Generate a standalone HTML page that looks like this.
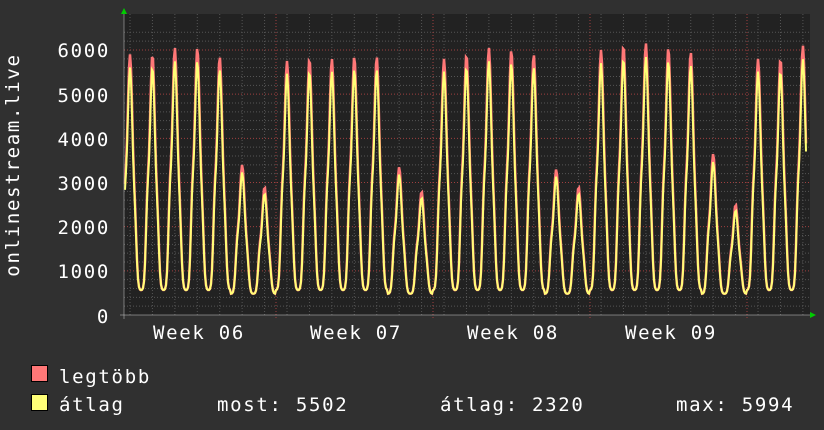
<!DOCTYPE html><html><head><meta charset="utf-8"><style>
body{margin:0;background:#303030;width:824px;height:430px;overflow:hidden;font-family:"DejaVu Sans Mono","Liberation Mono",monospace;color:#fff}
svg{position:absolute;left:0;top:0}
text{letter-spacing:1.7px}
</style></head><body>
<svg width="824" height="430" xmlns="http://www.w3.org/2000/svg" font-family="DejaVu Sans Mono, Liberation Mono, monospace">
<rect x="124" y="14" width="686" height="301" fill="#222"/>
<g id="grid"></g>
<g id="data"></g>
<line x1="124" y1="10" x2="124" y2="319" stroke="#ccc" stroke-width="1" opacity="0.5"/>
<line x1="120" y1="315" x2="812" y2="315" stroke="#ccc" stroke-width="1" opacity="0.5"/>
<polygon points="121,14 127,14 124,8" fill="#0c0"/>
<polygon points="810,312 810,318 816,315" fill="#0c0"/>
<g fill="#fff" font-size="19" text-anchor="end">
<text x="110" y="57">6000</text><text x="110" y="102">5000</text><text x="110" y="146">4000</text><text x="110" y="190">3000</text><text x="110" y="234">2000</text><text x="110" y="278">1000</text><text x="110" y="323">0</text>
</g>
<g fill="#fff" font-size="19" text-anchor="middle">
<text x="199" y="339">Week 06</text><text x="356" y="339">Week 07</text><text x="513" y="339">Week 08</text><text x="671" y="339">Week 09</text>
</g>
<text transform="translate(19,165) rotate(-90)" fill="#fff" font-size="19" text-anchor="middle">onlinestream.live</text>
<rect x="31.5" y="365.5" width="16" height="16" fill="#ff7777" stroke="#000"/>
<rect x="31.5" y="394.5" width="16" height="16" fill="#ffff77" stroke="#000"/>
<g fill="#fff" font-size="19">
<text x="59" y="383">legtöbb</text>
<text x="59" y="411">átlag</text>
<text x="217" y="411">most: 5502</text>
<text x="440" y="411">átlag: 2320</text>
<text x="676" y="411">max: 5994</text>
</g>
</svg>
<script>
var NS="http://www.w3.org/2000/svg";
function el(p,t,a){var e=document.createElementNS(NS,t);for(var k in a)e.setAttribute(k,a[k]);p.appendChild(e);return e;}
var g=document.getElementById("grid"),d=document.getElementById("data");
function Y(v){return 315-v*0.04417;}
for(var v=200;v<=6400;v+=200){var y=Y(v);var maj=v%1000==0;el(g,"line",{x1:124,x2:810,y1:y,y2:y,stroke:maj?"#a04040":"#555","stroke-dasharray":"1,2","stroke-width":1});}
for(var x=130;x<810;x+=22.43){el(g,"line",{x1:x,x2:x,y1:14,y2:315,stroke:"#555","stroke-dasharray":"1,2"});}
[276,433,590,747].forEach(function(x){el(g,"line",{x1:x,x2:x,y1:14,y2:319,stroke:"#a04040","stroke-dasharray":"1,2"});});
var peaks=[5900,5900,6050,6050,5850,3400,2900,5750,5800,5800,5850,5850,3350,2800,5800,5900,6050,6000,5900,3300,2900,6000,6100,6150,6050,5950,3650,2500,5800,5800,6100];
var px0=130,dx=22.43;
function val(x,scale){var t=(x-px0)/dx;var i=Math.round(t);i=Math.max(0,Math.min(peaks.length-1,i));var u=t-i;var P=peaks[i]*scale;
var base=peaks[i]<4000?480:560;var s=Math.exp(-Math.pow(u/0.18,2));var sh=u<0?0.3*Math.exp(-Math.pow((u+0.22)/0.1,2)):0.2*Math.exp(-Math.pow((u-0.22)/0.1,2));
return base+(P-base)*s+(P-base)*sh*(1-s);}
function path(scale){var s="";for(var x=125;x<=806;x+=1){s+=(x==125?"M":"L")+x+","+Y(val(x,scale)).toFixed(1);}return s;}
el(d,"path",{d:path(1),fill:"none",stroke:"#ff7777","stroke-width":2.5});
el(d,"path",{d:path(0.95),fill:"none",stroke:"#ffff77","stroke-width":2});
</script>
</body></html>
